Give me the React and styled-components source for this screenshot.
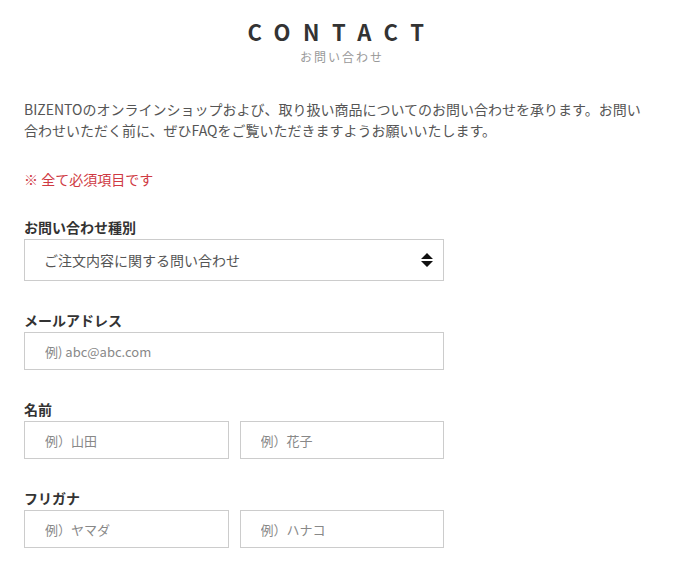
import styled, { createGlobalStyle } from "styled-components"

const GlobalStyle = createGlobalStyle`
  * {
    box-sizing: border-box;
  }

  body {
    margin: 0;
    background: #fff;
    font-family: "Noto Sans CJK JP", "Noto Sans", sans-serif;
    color: #555;
  }
`

const Page = styled.div`
  width: 684px;
  padding: 16px 24px 0;
`

const Heading = styled.header`
  display: flex;
  flex-direction: column;
  align-items: center;
`

const Title = styled.h1`
  margin: 0;
  font-size: 22px;
  line-height: 30px;
  font-weight: 700;
  letter-spacing: 12.5px;
  color: #333;
`

const Subtitle = styled.p`
  margin: 2px 0 0;
  font-size: 12px;
  line-height: 18px;
  letter-spacing: 2px;
  color: #999;
`

const Lead = styled.p`
  margin: 33px 0 0;
  max-width: 628px;
  font-size: 14px;
  line-height: 21px;
  color: #555;
`

const Notice = styled.p`
  margin: 28px 0 0;
  font-size: 14px;
  line-height: 21px;
  color: #cf3a43;
`

const Form = styled.form`
  display: flex;
  flex-direction: column;
  gap: 29px;
  margin-top: 27px;
  width: 420px;
`

const Field = styled.div`
  display: flex;
  flex-direction: column;
  gap: 2px;
`

const Label = styled.label`
  font-size: 14px;
  line-height: 20px;
  font-weight: 700;
  color: #333;
`

const Row = styled.div`
  display: grid;
  grid-template-columns: 1fr 1fr;
  gap: 11px;
`

const SelectBox = styled.div`
  position: relative;
  height: 42px;
  border: 1px solid #ccc;
  display: flex;
  align-items: center;
  padding: 0 19px;
  font-size: 14px;
  color: #555;
`

const Arrows = styled.svg`
  position: absolute;
  right: 10px;
  top: 50%;
  transform: translateY(-50%);
`

const Input = styled.input`
  height: 38px;
  width: 100%;
  border: 1px solid #ccc;
  border-radius: 0;
  padding: 0 20px;
  font-family: "Noto Sans CJK JP", "Noto Sans", sans-serif;
  font-size: 13px;
  color: #555;
  outline: none;

  &::placeholder {
    color: #888;
  }
`

export default function App() {
  return (
    <>
      <GlobalStyle />
      <Page>
        <Heading>
          <Title>CONTACT</Title>
          <Subtitle>お問い合わせ</Subtitle>
        </Heading>
        <Lead>
          BIZENTOのオンラインショップおよび、取り扱い商品についてのお問い合わせを承ります。お問い合わせいただく前に、ぜひFAQをご覧いただきますようお願いいたします。
        </Lead>
        <Notice>※ 全て必須項目です</Notice>
        <Form>
          <Field>
            <Label>お問い合わせ種別</Label>
            <SelectBox>
              ご注文内容に関する問い合わせ
              <Arrows width="12" height="16" viewBox="0 0 12 16">
                <path d="M6 1 L12 7 H0 Z M0 9 H12 L6 15 Z" fill="#111" />
              </Arrows>
            </SelectBox>
          </Field>
          <Field>
            <Label>メールアドレス</Label>
            <Input placeholder="例) abc@abc.com" />
          </Field>
          <Field>
            <Label>名前</Label>
            <Row>
              <Input placeholder="例）山田" />
              <Input placeholder="例）花子" />
            </Row>
          </Field>
          <Field>
            <Label>フリガナ</Label>
            <Row>
              <Input placeholder="例）ヤマダ" />
              <Input placeholder="例）ハナコ" />
            </Row>
          </Field>
        </Form>
      </Page>
    </>
  )
}
